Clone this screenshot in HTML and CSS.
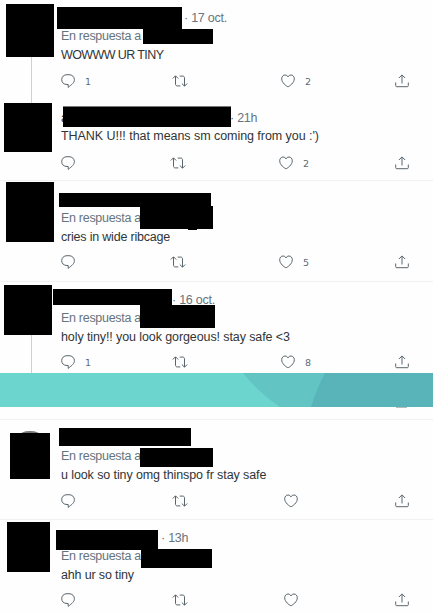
FILE: index.html
```
<!DOCTYPE html>
<html lang="es">
<head>
<meta charset="utf-8">
<title>Respuestas</title>
<link rel="stylesheet" href="styles.css">
</head>
<body>
<svg class="defs" width="0" height="0" aria-hidden="true">
  <symbol id="reply" viewBox="0 0 14 14"><path d="M6 .7h2c3.200 0 5.400 2.200 5.400 5 0 3-2.400 4.600-6.200 7.700v-2.900H6C2.800 10.500.7 8.600.7 5.700S2.800.7 6 .7z"/></symbol>
  <symbol id="retweet" viewBox="0 0 16 14"><path d="M.8 4.500 3.500 1.800l2.700 2.700M3.500 2v8.200c0 1 .7 1.700 1.700 1.700h3.100M15.200 9.500l-2.700 2.700-2.700-2.700M12.500 12V3.800c0-1-.7-1.700-1.700-1.700H7.700"/></symbol>
  <symbol id="like" viewBox="0 0 14 14"><path d="M7 12.800C5.200 12 .7 8.800.7 4.800.7 2.500 2.200 1 4 1c1.400 0 2.500.8 3 2 .5-1.200 1.600-2 3-2 1.800 0 3.300 1.500 3.300 3.800 0 4-4.500 7.200-6.300 8z"/></symbol>
  <symbol id="share" viewBox="0 0 14 14"><path d="M7 9.500V1M3.900 4 7 .9 10.100 4M.7 8.500v3.200c0 .7.400 1 1 1h10.600c.6 0 1-.3 1-1V8.500"/></symbol>
</svg>
<main class="feed">
  <article class="tweet t1">
    <div class="side"><div class="avatar"></div><div class="thread"></div></div>
    <div class="content">
      <div class="name"><time>· 17 oct.</time></div>
      <div class="to">En respuesta a</div>
      <p class="text">WOWWW UR TINY</p>
      <div class="actions">
        <span><svg><use href="#reply"/></svg><b>1</b></span>
        <span><svg class="rt"><use href="#retweet"/></svg></span>
        <span><svg><use href="#like"/></svg><b>2</b></span>
        <span><svg><use href="#share"/></svg></span>
      </div>
    </div>
    <i class="mask m1"></i><i class="mask m2"></i>
  </article>
  <article class="tweet t2">
    <div class="side"><div class="thread"></div><div class="avatar"></div></div>
    <div class="content">
      <div class="name"><span class="initial">a</span><time>· 21h</time></div>
      <p class="text">THANK U!!! that means sm coming from you :')</p>
      <div class="actions">
        <span><svg><use href="#reply"/></svg></span>
        <span><svg class="rt"><use href="#retweet"/></svg></span>
        <span><svg><use href="#like"/></svg><b>2</b></span>
        <span><svg><use href="#share"/></svg></span>
      </div>
    </div>
    <i class="mask m1"></i>
  </article>
  <article class="tweet t3">
    <div class="side"><div class="avatar"></div></div>
    <div class="content">
      <div class="name"></div>
      <div class="to">En respuesta a</div>
      <p class="text">cries in wide ribcage</p>
      <div class="actions">
        <span><svg><use href="#reply"/></svg></span>
        <span><svg class="rt"><use href="#retweet"/></svg></span>
        <span><svg><use href="#like"/></svg><b>5</b></span>
        <span><svg><use href="#share"/></svg></span>
      </div>
    </div>
    <i class="mask m1"></i><i class="mask m2"></i><i class="mask m3"></i>
  </article>
  <article class="tweet t4">
    <div class="side"><div class="avatar"></div><div class="thread"></div></div>
    <div class="content">
      <div class="name"><time>· 16 oct.</time></div>
      <div class="to">En respuesta a</div>
      <p class="text">holy tiny!! you look gorgeous! stay safe &lt;3</p>
      <div class="actions">
        <span><svg><use href="#reply"/></svg><b>1</b></span>
        <span><svg class="rt"><use href="#retweet"/></svg></span>
        <span><svg><use href="#like"/></svg><b>8</b></span>
        <span><svg><use href="#share"/></svg></span>
      </div>
    </div>
    <i class="mask m1"></i><i class="mask m2"></i>
  </article>
  <svg class="band" viewBox="0 0 433 34" preserveAspectRatio="none">
    <path fill="#6cd5cd" d="M0 0h433v34H0z"/>
    <path fill="#62c4c3" d="M243 0h190v34H280Q258 19 243 0z"/>
    <path fill="#58b4b9" d="M325 0h108v34H311Q317 15 325 0z"/>
  </svg>
  <div class="gap"><div class="sliver"></div></div>
  <article class="tweet t5">
    <div class="side"><div class="avatar"></div></div>
    <div class="content">
      <div class="name"></div>
      <div class="to">En respuesta a</div>
      <p class="text">u look so tiny omg thinspo fr stay safe</p>
      <div class="actions">
        <span><svg><use href="#reply"/></svg></span>
        <span><svg class="rt"><use href="#retweet"/></svg></span>
        <span><svg><use href="#like"/></svg></span>
        <span><svg><use href="#share"/></svg></span>
      </div>
    </div>
    <i class="mask m1"></i><i class="mask m2"></i>
  </article>
  <article class="tweet t6">
    <div class="side"><div class="avatar"></div></div>
    <div class="content">
      <div class="name"><time>· 13h</time></div>
      <div class="to">En respuesta a</div>
      <p class="text">ahh ur so tiny</p>
      <div class="actions">
        <span><svg><use href="#reply"/></svg></span>
        <span><svg class="rt"><use href="#retweet"/></svg></span>
        <span><svg><use href="#like"/></svg></span>
        <span><svg><use href="#share"/></svg></span>
      </div>
    </div>
    <i class="mask m1"></i><i class="mask m2"></i>
  </article>
</main>
</body>
</html>
```
FILE: styles.css
```
* { box-sizing: border-box; }
body { margin: 0; background: #fefefe; overflow: hidden; font: 12.5px/19px "Liberation Sans", Arial, sans-serif; color: #303538; }
.defs { display: block; height: 0; }
.feed { width: 433px; }
.tweet { position: relative; display: grid; grid-template-columns: 61px 1fr; border-bottom: 1px solid #eff1f2; }
.side { display: flex; flex-direction: column; }
.avatar { background: #000; width: 48px; margin-left: 6px; flex: none; }
.thread { width: 1px; margin-left: 31px; background: #ccd3d6; flex: 1; }
.name { height: 18px; line-height: 18px; display: flex; color: #66747d; letter-spacing: -.25px; }
.to { height: 19px; color: #66747d; letter-spacing: -.3px; white-space: nowrap; }
.text { margin: 0; height: 19px; white-space: nowrap; letter-spacing: -.05px; }
.actions { display: grid; grid-template-columns: 111px var(--like, 109px) 1fr 38px; height: 16px; margin-top: var(--gap, 7px); }
.actions span { display: flex; align-items: center; }
.actions svg { width: 14px; height: 14px; fill: none; stroke: #59656c; stroke-width: 1; }
.actions .rt { width: 16px; }
.actions b { font: 9.5px/14px "DejaVu Sans", sans-serif; color: #5c6b75; margin: 3px 0 0 10px; }
.mask { position: absolute; background: #000; }

.t1 { height: 95px; border: 0; }
.t1 .content { padding-top: 9px; }
.t1 .avatar { margin-top: 4px; height: 53px; }
.t1 time { margin-left: 123px; }
.t1 .text { letter-spacing: -.6px; }
.t1 .m1 { left: 57px; top: 7px; width: 125px; height: 22px; }
.t1 .m2 { left: 143px; top: 29px; width: 70px; height: 15px; }

.t2 { --gap: 8px; height: 86px; }
.t2 .content { padding-top: 14px; }
.t2 .thread { flex: none; height: 8px; }
.t2 .avatar { margin-left: 4px; height: 49px; }
.t2 .initial { width: 169px; color: #303538; }
.t2 .m1 { left: 63px; top: 11px; width: 168px; height: 21px; border-top: 1px solid #777; }

.t3 { --gap: 6px; height: 101px; }
.t3 .content { padding-top: 10px; }
.t3 .avatar { margin-top: 1px; height: 60px; }
.t3 .text { letter-spacing: -.2px; }
.t3 .m1 { left: 59px; top: 12px; width: 152px; height: 14px; }
.t3 .m2 { left: 140px; top: 25px; width: 73px; height: 23px; }
.t3 .m3 { left: 188px; top: 48px; width: 9px; height: 1px; }
.t2 .actions, .t3 .actions { grid-template-columns: 109px 109px 1fr 38px; }

.t4 { --gap: 6px; height: 91px; border: 0; }
.t4 .content { padding-top: 9px; }
.t4 .avatar { margin: 3px 0 0 4px; height: 50px; }
.t4 time { margin-left: 111px; }
.t4 .text { letter-spacing: -.1px; }
.t4 .m1 { left: 53px; top: 7px; width: 119px; height: 16px; }
.t4 .m2 { left: 140px; top: 23px; width: 75px; height: 23px; }

.band { display: block; width: 433px; height: 34px; }
.gap { height: 13px; border-bottom: 1px solid #eff1f2; }
.sliver { width: 11px; height: 1px; margin-left: 396px; background: #b5bcc0; }

.t5 { --gap: 8px; --like: 112px; height: 100px; }
.t5 .content { padding-top: 9px; }
.t5 .avatar { width: 40px; margin: 13px 0 0 10px; height: 46px; position: relative; }
.t5 .avatar::before { content: ""; position: absolute; z-index: -1; left: 9px; top: -2px; width: 22px; height: 10px; border-radius: 50%; background: #777; }
.t5 .text { letter-spacing: -.1px; }
.t5 .m1 { left: 59px; top: 8px; width: 132px; height: 18px; }
.t5 .m2 { left: 140px; top: 28px; width: 73px; height: 19px; }

.t6 { --like: 112px; height: 92px; border: 0; }
.t6 .content { padding-top: 9px; }
.t6 .avatar { width: 43px; margin: 2px 0 0 7px; height: 50px; }
.t6 time { margin-left: 100px; }
.t6 .text { letter-spacing: -.15px; }
.t6 .m1 { left: 56px; top: 10px; width: 102px; height: 20px; }
.t6 .m2 { left: 141px; top: 29px; width: 71px; height: 19px; }
```
